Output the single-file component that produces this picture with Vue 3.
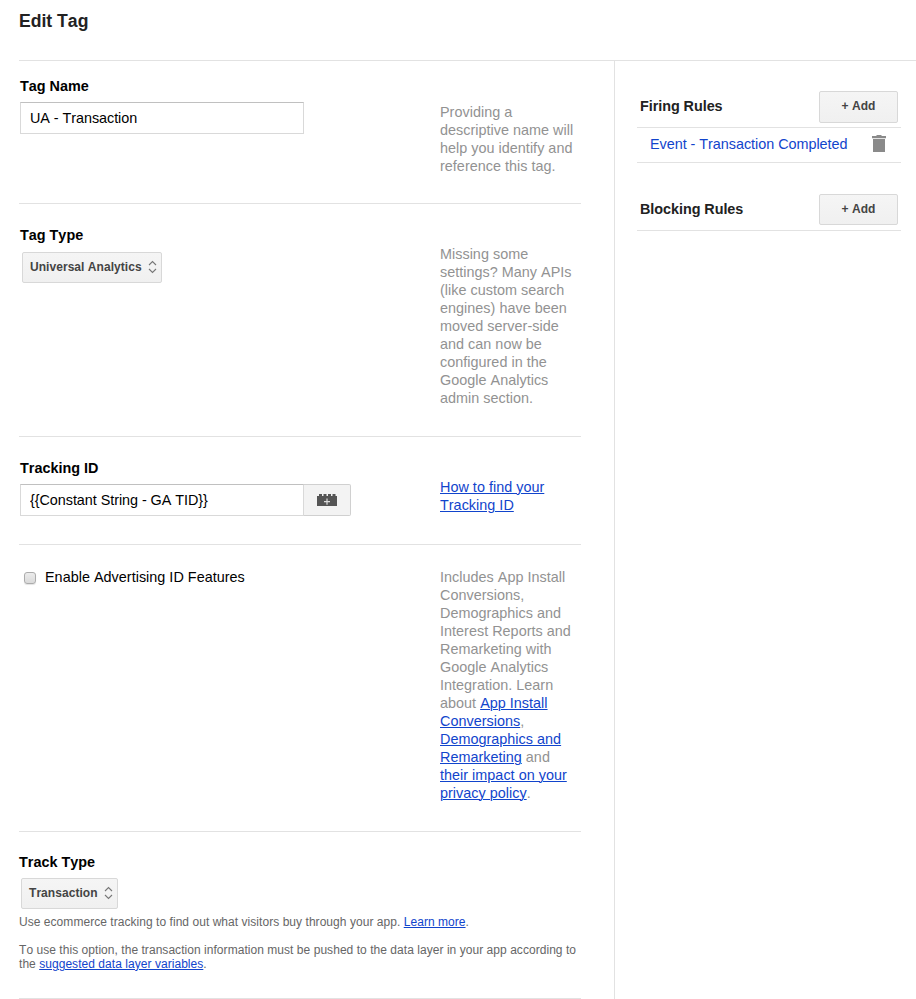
<script setup>
import { ref } from 'vue'

const tagName = ref('UA - Transaction')
const trackingId = ref('{{Constant String - GA TID}}')
const advertising = ref(false)
</script>

<template>
  <div class="page">
    <header class="header"><h1>Edit Tag</h1></header>
    <div class="body">
      <main class="main">
        <section class="section name">
          <div class="field">
            <h2>Tag Name</h2>
            <input v-model="tagName" class="text-input" type="text" />
          </div>
          <p class="help">Providing a<br />descriptive name will<br />help you identify and<br />reference this tag.</p>
        </section>

        <section class="section type">
          <div class="field">
            <h2>Tag Type</h2>
            <button class="btn select wide">
              <span>Universal Analytics</span>
              <svg width="9" height="14" viewBox="0 0 9 14"><path d="M1 5L4.5 1.5L8 5M1 9L4.5 12.5L8 9" /></svg>
            </button>
          </div>
          <p class="help">Missing some<br />settings? Many APIs<br />(like custom search<br />engines) have been<br />moved server-side<br />and can now be<br />configured in the<br />Google Analytics<br />admin section.</p>
        </section>

        <section class="section tracking">
          <div class="field">
            <h2>Tracking ID</h2>
            <div class="combo">
              <input v-model="trackingId" class="text-input" type="text" />
              <button class="brick">
                <svg width="20" height="12" viewBox="0 0 20 12">
                  <path fill="#555" d="M0 2H2V0H5V2H6.500V0H9.500V2H11V0H14V2H15.500V0H18.500V2H20V12H0Z" />
                  <path fill="#ddd" d="M9.400 4.500H10.600V7H13V8.200H10.600V10.700H9.400V8.200H7V7H9.400Z" />
                </svg>
              </button>
            </div>
          </div>
          <p class="help"><a>How to find your</a><br /><a>Tracking ID</a></p>
        </section>

        <section class="section ads">
          <div class="field">
            <label class="check"><input v-model="advertising" type="checkbox" /><span>Enable Advertising ID Features</span></label>
          </div>
          <p class="help">Includes App Install<br />Conversions,<br />Demographics and<br />Interest Reports and<br />Remarketing with<br />Google Analytics<br />Integration. Learn<br />about <a>App Install<br />Conversions</a>,<br /><a>Demographics and<br />Remarketing</a> and<br /><a>their impact on your<br />privacy policy</a>.</p>
        </section>

        <section class="section track">
          <div class="field">
            <h2>Track Type</h2>
            <button class="btn select narrow">
              <span>Transaction</span>
              <svg width="9" height="14" viewBox="0 0 9 14"><path d="M1 5L4.5 1.5L8 5M1 9L4.5 12.5L8 9" /></svg>
            </button>
            <p class="note">Use ecommerce tracking to find out what visitors buy through your app. <a>Learn more</a>.</p>
            <p class="note second">To use this option, the transaction information must be pushed to the data layer in your app according to<br />the <a>suggested data layer variables</a>.</p>
          </div>
        </section>
      </main>

      <aside class="side">
        <div class="rules-head">
          <h2>Firing Rules</h2>
          <button class="btn add">+ Add</button>
        </div>
        <div class="rule">
          <a>Event - Transaction Completed</a>
          <svg width="14" height="17" viewBox="0 0 14 17"><path fill="#8a8a8a" d="M4.500 0H9.500V1H14V3.200H0V1H4.500ZM1 4H13V17H1Z" /></svg>
        </div>
        <div class="rules-head blocking">
          <h2>Blocking Rules</h2>
          <button class="btn add">+ Add</button>
        </div>
      </aside>
    </div>
  </div>
</template>

<style>
body { margin: 0; background: #fff; }
</style>

<style scoped>
.page {
  width: 916px;
  height: 999px;
  overflow: hidden;
  display: flex;
  flex-direction: column;
  padding-left: 19px;
  box-sizing: border-box;
  font-family: "Liberation Sans", Arial, sans-serif;
  font-size: 14.4px;
  line-height: 18px;
  font-kerning: none;
  color: #000;
}
.page * { box-sizing: border-box; }
h1, h2, p { margin: 0; }
.header { height: 61px; padding-top: 10px; border-bottom: 1px solid #e2e2e2; flex: none; }
h1 { font-size: 17.6px; line-height: 22px; color: #222; }
h2 { font-size: 14.4px; line-height: 18px; white-space: nowrap; }
.body { display: flex; flex: 1; }
.main { width: 595px; padding-right: 33px; flex: none; }
.section { display: flex; border-bottom: 1px solid #e2e2e2; }
.field { width: 421px; flex: none; padding-left: 1px; }
.help { color: #929292; white-space: nowrap; letter-spacing: 0.02px; }
a { color: #1144cc; text-decoration: underline; text-underline-offset: 1px; text-decoration-thickness: 1px; }

.name { height: 143px; padding-top: 16px; }
.name .help { padding-top: 26px; }
.type { height: 233px; padding-top: 22px; }
.type .help { padding-top: 19px; }
.tracking { height: 108px; padding-top: 22px; }
.tracking .help { padding-top: 19px; }
.ads { height: 287px; padding-top: 23px; }
.track { height: 167px; padding-top: 21px; }
.track .field { width: 100%; padding-left: 0; }

.text-input {
  display: block;
  width: 284px;
  height: 32px;
  padding: 0 9px;
  border: 1px solid #d9d9d9;
  border-top-color: #c0c0c0;
  font: inherit;
  font-kerning: none;
  letter-spacing: -0.05px;
  color: #000;
  background: #fff;
  border-radius: 0;
  outline: none;
}
.name .text-input, .tracking .combo { margin-top: 7px; }
.combo { display: flex; }
.brick {
  width: 47px;
  height: 32px;
  padding: 0;
  display: flex;
  align-items: center;
  justify-content: center;
  border: 1px solid #d0d0d0;
  border-left: 0;
  border-radius: 0 2px 2px 0;
  background: #f3f3f3;
}
.btn {
  display: flex;
  align-items: center;
  height: 31px;
  padding: 0 4px 1px 7px;
  border: 1px solid #d8d8d8;
  border-radius: 2px;
  background: linear-gradient(#f5f5f5, #f0f0f0);
  font: bold 12px/16px "Liberation Sans", Arial, sans-serif;
  font-kerning: none;
  letter-spacing: 0.05px;
  color: #444;
  white-space: nowrap;
}
.btn span { padding-bottom: 1px; }
.select { justify-content: space-between; }
.select svg { fill: none; stroke: #777; stroke-width: 1.1; }
.wide { width: 140px; margin: 8px 0 0 2px; }
.narrow { width: 97px; margin: 7px 0 0 2px; }

.check { display: flex; align-items: flex-start; letter-spacing: 0.02px; }
.check input {
  appearance: none;
  width: 12px;
  height: 12px;
  margin: 4px 9px 0 4px;
  border: 1px solid #acacac;
  border-radius: 3px;
  background: linear-gradient(#ececec, #dadada);
  box-shadow: 0 1px 1px #e4e4e4;
}
.note { margin-top: 6px; font-size: 12px; line-height: 14px; color: #666; white-space: nowrap; letter-spacing: 0.045px; }
.note.second { margin-top: 14px; }

.side { flex: 1; border-left: 1px solid #e2e2e2; padding: 30px 15px 0 22px; }
.side h2 { color: #222; letter-spacing: -0.05px; }
.rules-head { display: flex; justify-content: space-between; height: 37px; padding: 0 3px; border-bottom: 1px solid #e2e2e2; }
.rules-head h2 { padding-top: 6px; }
.add { width: 79px; height: 32px; justify-content: center; padding: 0 0 2px; }
.rule { display: flex; justify-content: space-between; height: 35px; padding: 7px 15px 0 13px; border-bottom: 1px solid #e2e2e2; }
.rule a { text-decoration: none; white-space: nowrap; letter-spacing: -0.03px; }
.blocking { margin-top: 31px; }
.blocking .add { height: 31px; }
</style>
